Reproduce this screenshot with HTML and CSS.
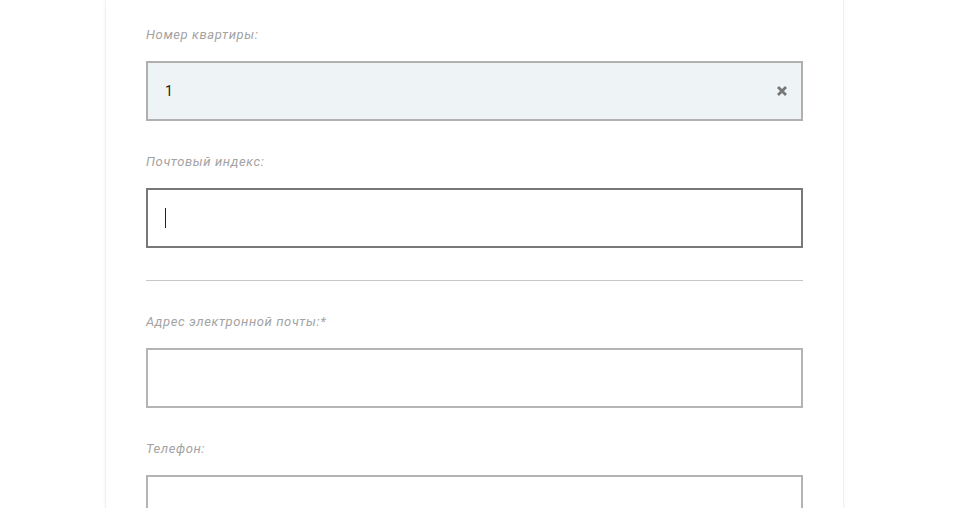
FILE: index.html
```html
<!DOCTYPE html>
<html lang="ru">
<head>
<meta charset="utf-8">
<link rel="stylesheet" href="styles.css">
</head>
<body>
<div class="page">
  <div class="card">
    <div class="field">
      <div class="label">Номер квартиры:</div>
      <div class="input filled">
        <span class="value">1</span>
        <svg class="clear" width="12" height="12" viewBox="0 0 12 12"><path d="M2 2 L10 10 M10 2 L2 10" stroke="#777" stroke-width="2.8" stroke-linecap="butt"/></svg>
      </div>
    </div>
    <div class="field">
      <div class="label">Почтовый индекс:</div>
      <div class="input focused"><span class="caret"></span></div>
    </div>
    <hr class="sep">
    <div class="field">
      <div class="label">Адрес электронной почты:*</div>
      <div class="input"></div>
    </div>
    <div class="field">
      <div class="label">Телефон:</div>
      <div class="input"></div>
    </div>
  </div>
</div>
</body>
</html>
```
FILE: styles.css
```css
html, body {
  margin: 0;
  padding: 0;
  background: #fff;
  overflow: hidden;
}
.page {
  padding-left: 105px;
  height: 508px;
}
.card {
  width: 739px;
  border-left: 1px solid #f0f0f0;
  border-right: 1px solid #f0f0f0;
  box-shadow: 0 0 4px rgba(0,0,0,0.04);
  padding: 25px 40px 0 40px;
  height: 600px;
  box-sizing: border-box;
  font-family: Roboto, "Noto Sans", sans-serif;
}
.field {
  margin-bottom: 31px;
}
.label {
  font-style: italic;
  font-size: 13px;
  line-height: 20px;
  letter-spacing: 0.6px;
  color: #a3a3a3;
  margin-bottom: 16px;
}
.input {
  height: 60px;
  box-sizing: border-box;
  border: 2px solid #b4b4b4;
  background: #fff;
  display: flex;
  align-items: center;
  padding: 0 17px;
  width: 657px;
}
.input.filled {
  background: #eef3f6;
  border-color: #b0b0b0;
  justify-content: space-between;
}
.input.focused {
  border-color: #787878;
}
.value {
  font-size: 14px;
  color: #222;
}
.clear {
  margin-right: -4px;
}
.caret {
  width: 1px;
  height: 20px;
  background: #222;
}
.sep {
  border: 0;
  border-top: 1px solid #c6c6c6;
  margin: 32px 0 31px 0;
  width: 657px;
}
```
